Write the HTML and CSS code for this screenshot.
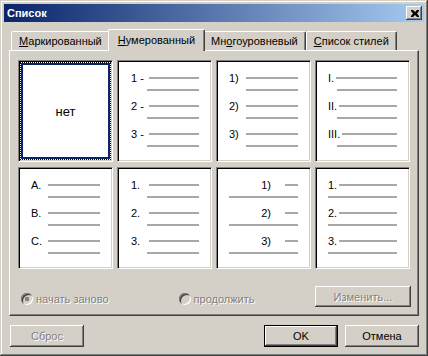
FILE: index.html
```html
<!DOCTYPE html>
<html lang="ru">
<head>
    <meta charset="UTF-8">
    <title>Список</title>
    <link rel="stylesheet" href="styles.css">
</head>
<body>
    <div class="window">
        <div class="titlebar">
            <span class="title">Список</span>
            <button class="close">
                <svg width="8" height="7" viewBox="0 0 8 7"><path d="M0 0h2l2 2 2-2h2v1l-2 2.5 2 2.5v1h-2l-2-2-2 2h-2v-1l2-2.5-2-2.5z" fill="#000"/></svg>
            </button>
        </div>
        <div class="body">
            <div class="tabs">
                <div class="tab"><u>М</u>аркированный</div>
                <div class="tab active"><u>Н</u>умерованный</div>
                <div class="tab">Мн<u>о</u>гоуровневый</div>
                <div class="tab"><u>С</u>писок стилей</div>
            </div>
            <div class="panel">
                <div class="grid">
                    <div class="card active none">нет</div>

                    <div class="card dash">
                        <div class="item"><span class="num">1 -</span><span class="bar"></span></div>
                        <div class="sub"></div>
                        <div class="item"><span class="num">2 -</span><span class="bar"></span></div>
                        <div class="sub"></div>
                        <div class="item"><span class="num">3 -</span><span class="bar"></span></div>
                        <div class="sub"></div>
                    </div>

                    <div class="card">
                        <div class="item"><span class="num">1)</span><span class="bar"></span></div>
                        <div class="sub"></div>
                        <div class="item"><span class="num">2)</span><span class="bar"></span></div>
                        <div class="sub"></div>
                        <div class="item"><span class="num">3)</span><span class="bar"></span></div>
                        <div class="sub"></div>
                    </div>

                    <div class="card roman">
                        <div class="item"><span class="num">I.</span><span class="bar"></span></div>
                        <div class="sub"></div>
                        <div class="item"><span class="num">II.</span><span class="bar"></span></div>
                        <div class="sub"></div>
                        <div class="item"><span class="num">III.</span><span class="bar"></span></div>
                        <div class="sub"></div>
                    </div>

                    <div class="card">
                        <div class="item"><span class="num">A.</span><span class="bar"></span></div>
                        <div class="sub"></div>
                        <div class="item"><span class="num">B.</span><span class="bar"></span></div>
                        <div class="sub"></div>
                        <div class="item"><span class="num">C.</span><span class="bar"></span></div>
                        <div class="sub"></div>
                    </div>

                    <div class="card dash">
                        <div class="item"><span class="num">1.</span><span class="bar"></span></div>
                        <div class="sub"></div>
                        <div class="item"><span class="num">2.</span><span class="bar"></span></div>
                        <div class="sub"></div>
                        <div class="item"><span class="num">3.</span><span class="bar"></span></div>
                        <div class="sub"></div>
                    </div>

                    <div class="card right">
                        <div class="item"><span class="num">1)</span><span class="bar"></span></div>
                        <div class="sub"></div>
                        <div class="item"><span class="num">2)</span><span class="bar"></span></div>
                        <div class="sub"></div>
                        <div class="item"><span class="num">3)</span><span class="bar"></span></div>
                        <div class="sub"></div>
                    </div>

                    <div class="card flush">
                        <div class="item"><span class="num">1.</span><span class="bar"></span></div>
                        <div class="sub"></div>
                        <div class="item"><span class="num">2.</span><span class="bar"></span></div>
                        <div class="sub"></div>
                        <div class="item"><span class="num">3.</span><span class="bar"></span></div>
                        <div class="sub"></div>
                    </div>
                </div>

                <div class="options">
                    <label class="option"><span class="radio checked"></span>начать заново</label>
                    <label class="option second"><span class="radio"></span>продолжить</label>
                    <button class="btn change" disabled>Изменить...</button>
                </div>
            </div>

            <div class="footer">
                <button class="btn" disabled>Сброс</button>
                <button class="btn default">OK</button>
                <button class="btn">Отмена</button>
            </div>
        </div>
    </div>
</body>
</html>
```

FILE: styles.css
```css
* {
    margin: 0;
    padding: 0;
    box-sizing: border-box;
}

body {
    font-family: 'Liberation Sans', Arial, sans-serif;
    font-size: 11px;
    color: #000;
    background: #d4d0c8;
}

.window {
    width: 428px;
    height: 356px;
    padding: 4px;
    background: #d4d0c8;
    box-shadow: inset -1px -1px #404040, inset 1px 1px #d4d0c8,
        inset -2px -2px #808080, inset 2px 2px #fff;
}

.titlebar {
    height: 18px;
    display: flex;
    align-items: center;
    justify-content: space-between;
    padding: 0 2px 0 3px;
    background: linear-gradient(to right, #0a246a, #a6caf0);
    color: #fff;
}

.title {
    font-weight: bold;
    font-size: 11px;
}

.close {
    width: 16px;
    height: 14px;
    border: none;
    background: #d4d0c8;
    display: flex;
    align-items: center;
    justify-content: center;
    padding-left: 1px;
    box-shadow: inset -1px -1px #404040, inset 1px 1px #fff,
        inset -2px -2px #808080;
}

.body {
    padding: 7px 5px 0 5px;
}

/* tabs */

.tabs {
    display: flex;
    align-items: flex-end;
    padding-left: 2px;
    position: relative;
    z-index: 1;
}

.tab {
    height: 19px;
    padding: 3px 7px 0 7px;
    border-top: 1px solid #fff;
    border-left: 1px solid #fff;
    border-right: 1px solid #404040;
    border-top-left-radius: 2px;
    border-top-right-radius: 2px;
    box-shadow: inset -1px 0 #808080;
    background: #d4d0c8;
    white-space: nowrap;
}

.tab.active {
    height: 22px;
    margin: 0 -2px -1px -2px;
    padding: 4px 9px 0 9px;
    position: relative;
    z-index: 2;
}

.tab u {
    text-decoration: underline;
    text-underline-offset: 1px;
}

.panel {
    border-top: 1px solid #fff;
    border-left: 1px solid #fff;
    border-right: 1px solid #404040;
    border-bottom: 1px solid #404040;
    box-shadow: inset -1px -1px #808080;
    padding: 9px 8px 8px 8px;
}

/* preview grid */

.grid {
    display: grid;
    grid-template-columns: repeat(4, 95px);
    grid-auto-rows: 102px;
    column-gap: 4px;
    row-gap: 5px;
}

.card {
    background: #fff;
    border: 1px solid;
    border-color: #808080 #fff #fff #808080;
    box-shadow: inset 1px 1px #000, inset -1px -1px #d4d0c8;
    padding: 11px 12px 0 12px;
}

.card.active {
    outline: 1px dotted #000;
    outline-offset: -3px;
    box-shadow: inset 1px 1px #000, inset -1px -1px #d4d0c8,
        inset 0 0 0 2px #fff, inset 0 0 0 4px #0a246a;
}

.card.none {
    display: flex;
    align-items: center;
    justify-content: center;
    padding: 0;
    font-size: 13px;
}

.item {
    display: flex;
    align-items: center;
    height: 12px;
}

.num {
    width: 17px;
    flex-shrink: 0;
}

.bar {
    flex: 1;
    height: 2px;
    background: #a8a8a8;
}

.sub {
    height: 2px;
    margin: 5px 0 9px 17px;
    background: #a8a8a8;
}

.dash .num {
    padding-left: 1px;
    width: 19px;
}

.dash .sub {
    margin-left: 17px;
}

.roman .num {
    width: auto;
    margin-right: 2px;
}

.roman .sub {
    margin-left: 9px;
}

.right .num {
    width: 42px;
    text-align: right;
}

.right .bar {
    flex: none;
    width: 13px;
    margin-left: 14px;
}

.right .sub {
    margin-left: 0;
}

.flush .num {
    width: auto;
    margin-right: 2px;
}

.flush .sub {
    margin-left: 0;
}

/* options */

.options {
    display: flex;
    align-items: center;
    margin-top: 17px;
    height: 21px;
    color: #808080;
    text-shadow: 1px 1px #fff;
}

.option {
    display: flex;
    align-items: center;
    gap: 3px;
    margin-left: 3px;
    margin-top: 4px;
}

.option.second {
    margin-left: 70px;
}

.radio {
    width: 12px;
    height: 12px;
    border-radius: 50%;
    background: #d4d0c8;
    box-shadow: inset 1px 1px #808080, inset -1px -1px #fff,
        inset 2px 2px #404040, inset -2px -2px #d4d0c8;
}

.radio.checked {
    background: radial-gradient(circle, #808080 0 2px, #d4d0c8 2.5px);
}

.btn {
    width: 74px;
    height: 22px;
    border: none;
    background: #d4d0c8;
    font-family: 'Liberation Sans', Arial, sans-serif;
    font-size: 11px;
    color: #000;
    box-shadow: inset -1px -1px #404040, inset 1px 1px #fff,
        inset -2px -2px #808080;
}

.btn:disabled {
    color: #808080;
    text-shadow: 1px 1px #fff;
}

.btn.change {
    width: 96px;
    height: 21px;
    margin-left: auto;
    margin-right: -1px;
}

.btn.default {
    border: 1px solid #000;
    margin-left: auto;
}

.footer {
    display: flex;
    gap: 7px;
    margin-top: 9px;
    padding: 0 0 0 1px;
}
```
